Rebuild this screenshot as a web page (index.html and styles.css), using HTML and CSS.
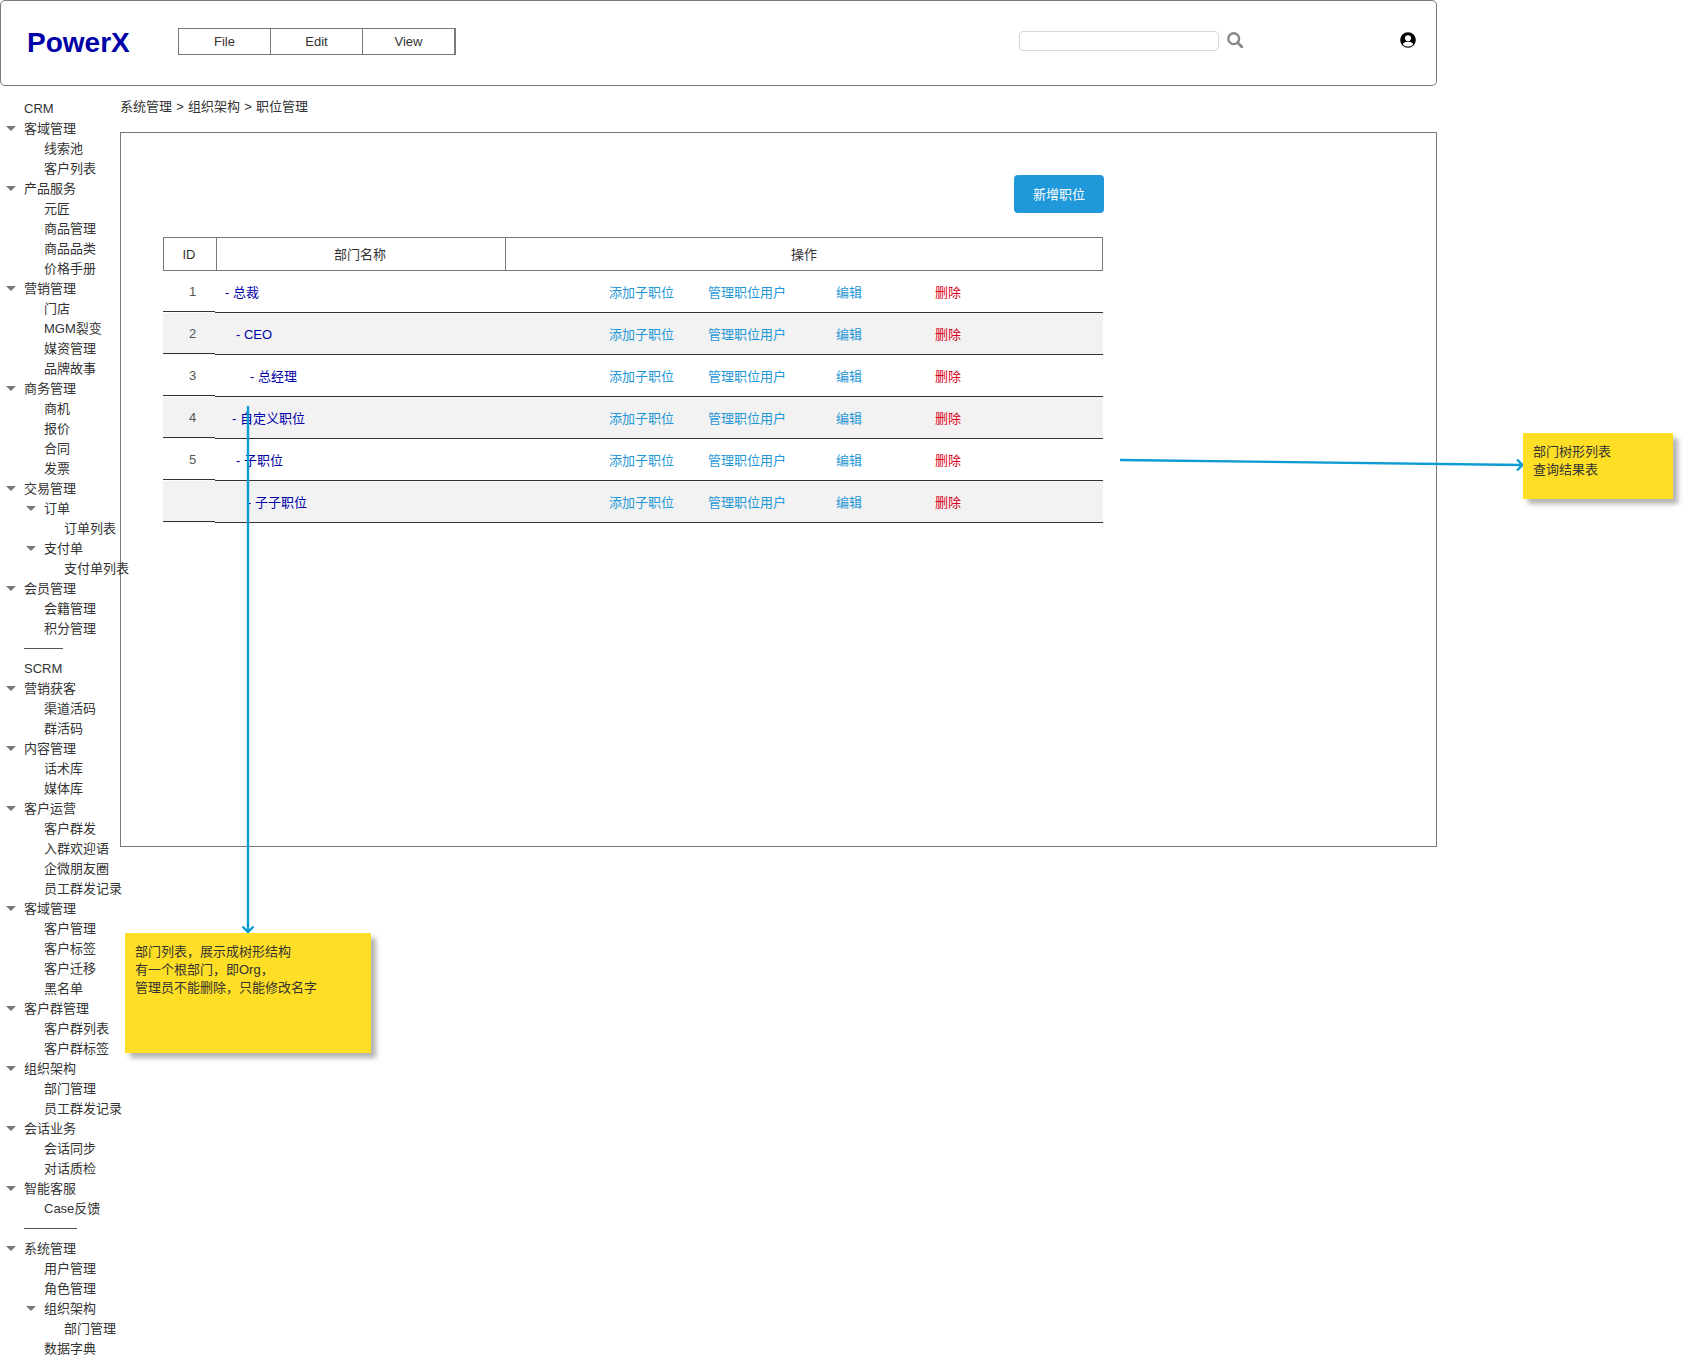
FILE: index.html
```html
<!DOCTYPE html>
<html lang="zh-CN">
<head>
    <meta charset="UTF-8">
    <title>职位管理</title>
    <link rel="stylesheet" href="styles.css">
</head>
<body>
    <header class="main-header">
        <div class="logo">PowerX</div>
        <nav class="top-menu">
            <a>File</a>
            <a>Edit</a>
            <a>View</a>
        </nav>
        <input class="search-input" type="text">
        <svg class="search-icon" viewBox="0 0 16 16"><circle cx="6.700" cy="6.700" r="5.400" fill="none" stroke="#888" stroke-width="2.400"/><path d="M10.800 10.800 15 15" stroke="#888" stroke-width="2.800" stroke-linecap="round"/></svg>
        <svg class="user-icon" viewBox="0 0 16 16"><circle cx="8" cy="8" r="7.800" fill="#000"/><circle cx="8" cy="6.200" r="3" fill="#fff"/><path d="M2.800 12.400C3.600 10.400 5.400 9.800 8 9.800s4.400.6 5.200 2.600A6.400 6.400 0 0 1 8 14.600a6.400 6.400 0 0 1-5.200-2.200z" fill="#fff"/></svg>
    </header>

    <div class="page-body">
        <ul class="side-menu">
            <li>CRM</li>
            <li class="open">客域管理</li>
            <li class="sub">线索池</li>
            <li class="sub">客户列表</li>
            <li class="open">产品服务</li>
            <li class="sub">元匠</li>
            <li class="sub">商品管理</li>
            <li class="sub">商品品类</li>
            <li class="sub">价格手册</li>
            <li class="open">营销管理</li>
            <li class="sub">门店</li>
            <li class="sub">MGM裂变</li>
            <li class="sub">媒资管理</li>
            <li class="sub">品牌故事</li>
            <li class="open">商务管理</li>
            <li class="sub">商机</li>
            <li class="sub">报价</li>
            <li class="sub">合同</li>
            <li class="sub">发票</li>
            <li class="open">交易管理</li>
            <li class="sub open">订单</li>
            <li class="sub2">订单列表</li>
            <li class="sub open">支付单</li>
            <li class="sub2">支付单列表</li>
            <li class="open">会员管理</li>
            <li class="sub">会籍管理</li>
            <li class="sub">积分管理</li>
            <li class="rule"><span class="divider short"></span></li>
            <li>SCRM</li>
            <li class="open">营销获客</li>
            <li class="sub">渠道活码</li>
            <li class="sub">群活码</li>
            <li class="open">内容管理</li>
            <li class="sub">话术库</li>
            <li class="sub">媒体库</li>
            <li class="open">客户运营</li>
            <li class="sub">客户群发</li>
            <li class="sub">入群欢迎语</li>
            <li class="sub">企微朋友圈</li>
            <li class="sub">员工群发记录</li>
            <li class="open">客域管理</li>
            <li class="sub">客户管理</li>
            <li class="sub">客户标签</li>
            <li class="sub">客户迁移</li>
            <li class="sub">黑名单</li>
            <li class="open">客户群管理</li>
            <li class="sub">客户群列表</li>
            <li class="sub">客户群标签</li>
            <li class="open">组织架构</li>
            <li class="sub">部门管理</li>
            <li class="sub">员工群发记录</li>
            <li class="open">会话业务</li>
            <li class="sub">会话同步</li>
            <li class="sub">对话质检</li>
            <li class="open">智能客服</li>
            <li class="sub">Case反馈</li>
            <li class="rule"><span class="divider"></span></li>
            <li class="open">系统管理</li>
            <li class="sub">用户管理</li>
            <li class="sub">角色管理</li>
            <li class="sub open">组织架构</li>
            <li class="sub2">部门管理</li>
            <li class="sub">数据字典</li>
        </ul>

        <main class="main-col">
            <div class="breadcrumb">系统管理 &gt; 组织架构 &gt; 职位管理</div>
            <section class="panel">
                <div class="panel-inner">
                    <div class="toolbar">
                        <button class="add-btn">新增职位</button>
                    </div>
                    <div class="table-head">
                        <div class="col-id">ID</div>
                        <div class="col-name">部门名称</div>
                        <div class="col-ops">操作</div>
                    </div>
                    <div class="table-row">
                        <div class="cell-id">1</div>
                        <div class="cell-main"><span class="name lv1">- 总裁</span><a>添加子职位</a><a>管理职位用户</a><a>编辑</a><a class="danger">删除</a></div>
                    </div>
                    <div class="table-row">
                        <div class="cell-id">2</div>
                        <div class="cell-main"><span class="name lv2">- CEO</span><a>添加子职位</a><a>管理职位用户</a><a>编辑</a><a class="danger">删除</a></div>
                    </div>
                    <div class="table-row">
                        <div class="cell-id">3</div>
                        <div class="cell-main"><span class="name lv3">- 总经理</span><a>添加子职位</a><a>管理职位用户</a><a>编辑</a><a class="danger">删除</a></div>
                    </div>
                    <div class="table-row">
                        <div class="cell-id">4</div>
                        <div class="cell-main"><span class="name lv4">- 自定义职位</span><a>添加子职位</a><a>管理职位用户</a><a>编辑</a><a class="danger">删除</a></div>
                    </div>
                    <div class="table-row">
                        <div class="cell-id">5</div>
                        <div class="cell-main"><span class="name lv2">- 子职位</span><a>添加子职位</a><a>管理职位用户</a><a>编辑</a><a class="danger">删除</a></div>
                    </div>
                    <div class="table-row">
                        <div class="cell-id"></div>
                        <div class="cell-main"><span class="name lv5">- 子子职位</span><a>添加子职位</a><a>管理职位用户</a><a>编辑</a><a class="danger">删除</a></div>
                    </div>
                </div>
            </section>
        </main>
    </div>

    <!-- annotations on top of the wireframe -->
    <svg class="arrows" viewBox="0 0 1684 1358">
        <path d="M248 406V932M242.500 926.500 248 932l5.500-5.500" fill="none" stroke="#0c9bd2" stroke-width="2.400"/>
        <path d="M1120 460 1522 465M1517 459.500l5.500 5.500-5.500 5.500" fill="none" stroke="#0c9bd2" stroke-width="2.400"/>
    </svg>
    <div class="note note-right">部门树形列表<br>查询结果表</div>
    <div class="note note-left">部门列表，展示成树形结构<br>有一个根部门，即Org，<br>管理员不能删除，只能修改名字</div>
</body>
</html>
```

FILE: styles.css
```css
* {
  box-sizing: border-box;
}
body {
  margin: 0;
  width: 1684px;
  height: 1358px;
  position: relative;
  overflow: hidden;
  background-color: #fff;
  font-family: "Liberation Sans", "Noto Sans CJK SC", sans-serif;
  font-size: 13px;
  color: #333;
}

/* Header */
.main-header {
  width: 1437px;
  height: 86px;
  padding: 0 20px 4px 26px;
  display: flex;
  align-items: center;
  border: 1px solid #797979;
  border-radius: 5px;
}
.logo {
  width: 151px;
  margin-top: 4px;
  font-size: 28px;
  font-weight: bold;
  color: #0000a8;
}
.top-menu {
  display: flex;
  width: 278px;
  height: 27px;
  border: 1px solid #797979;
  border-right-width: 2px;
}
.top-menu a {
  flex: 1;
  line-height: 25px;
  text-align: center;
  border-right: 1px solid #797979;
}
.top-menu a:last-child {
  border-right: none;
}
.search-input {
  width: 200px;
  height: 20px;
  margin-left: auto;
  border: 1px solid #d7d7d7;
  border-radius: 4px;
  background: #fff;
}
.search-icon {
  width: 16px;
  height: 16px;
  margin-left: 8px;
  margin-bottom: 2px;
}
.user-icon {
  width: 16px;
  height: 16px;
  margin-left: 157px;
  margin-bottom: 2px;
}

/* Layout */
.page-body {
  display: flex;
  width: 1437px;
}
.side-menu {
  width: 120px;
  flex-shrink: 0;
  margin: 0;
  padding: 13px 0 0 24px;
  list-style: none;
}
.side-menu li {
  position: relative;
  height: 20px;
  line-height: 20px;
  white-space: nowrap;
}
.side-menu .sub {
  padding-left: 20px;
}
.side-menu .sub2 {
  padding-left: 40px;
}
.side-menu .rule {
  padding-top: 9px;
}
.side-menu .open::before {
  content: "";
  position: absolute;
  left: -18px;
  top: 7px;
  border-left: 5px solid transparent;
  border-right: 5px solid transparent;
  border-top: 5px solid #797979;
}
.side-menu .sub.open::before {
  left: 2px;
}
.divider {
  display: block;
  width: 53px;
  border-top: 1px solid #555;
}
.divider.short {
  width: 39px;
}

.main-col {
  flex: 1;
}
.breadcrumb {
  height: 20px;
  margin-top: 10px;
  line-height: 21px;
  word-spacing: 0.6px;
}
.panel {
  height: 715px;
  margin-top: 16px;
  padding: 42px 0 0 42px;
  border: 1px solid #797979;
}
.panel-inner {
  width: 941px;
}
.toolbar {
  display: flex;
  justify-content: flex-end;
  margin-bottom: 24px;
}
.add-btn {
  width: 90px;
  height: 38px;
  padding: 0 0 2px;
  border: none;
  border-radius: 4px;
  background-color: #1f99d9;
  color: #fff;
  font: inherit;
}

/* Table */
.table-head {
  width: 940px;
  height: 34px;
  display: flex;
  line-height: 34px;
  text-align: center;
  border: 1px solid #797979;
}
.col-id {
  width: 53px;
  padding-right: 2px;
  border-right: 1px solid #797979;
}
.col-name {
  width: 289px;
  padding-right: 2px;
  border-right: 1px solid #797979;
}
.col-ops {
  flex: 1;
}
.table-row {
  width: 940px;
  height: 42px;
  display: flex;
}
.table-row:nth-child(even) {
  background-color: #f2f2f2;
}
.cell-id {
  width: 52px;
  height: 41px;
  padding-left: 7px;
  line-height: 41px;
  text-align: center;
  color: #555;
  border-bottom: 1px solid #333;
}
.cell-main {
  flex: 1;
  height: 42px;
  display: grid;
  grid-template-columns: 394px 99px 128px 99px 1fr;
  line-height: 43px;
  border-bottom: 1px solid #333;
}
.cell-main a {
  color: #1f97d6;
}
.cell-main a.danger {
  color: #d9001b;
}
.name {
  color: #0000a8;
}
.lv1 {
  padding-left: 10px;
}
.lv2 {
  padding-left: 21px;
}
.lv3 {
  padding-left: 35px;
}
.lv4 {
  padding-left: 17px;
}
.lv5 {
  padding-left: 32px;
}

/* Annotations */
.arrows {
  position: absolute;
  left: 0;
  top: 0;
  width: 1684px;
  height: 1358px;
  pointer-events: none;
}
.note {
  position: absolute;
  padding: 10px;
  line-height: 18.200px;
  background-color: #ffdf25;
  box-shadow: 5px 5px 5px rgba(0, 0, 0, 0.3);
}
.note-right {
  left: 1523px;
  top: 433px;
  width: 150px;
  height: 66px;
}
.note-left {
  left: 125px;
  top: 933px;
  width: 246px;
  height: 120px;
}
```
